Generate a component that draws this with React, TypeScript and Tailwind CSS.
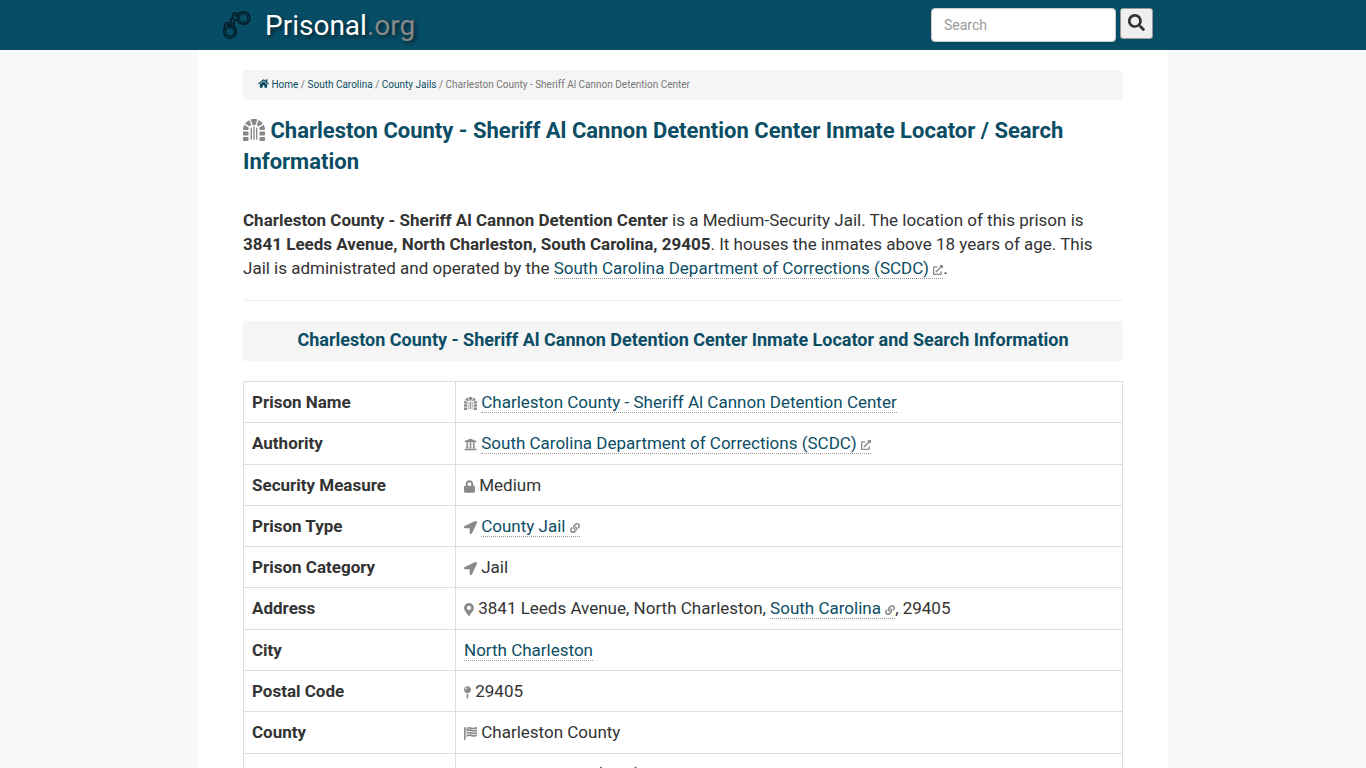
import type { ReactNode } from "react";
import {
  FaDungeon,
  FaExternalLinkAlt,
  FaFlagUsa,
  FaHome,
  FaLink,
  FaLocationArrow,
  FaLock,
  FaMapMarkerAlt,
  FaMapPin,
  FaSearch,
  FaUniversity,
} from "react-icons/fa";

const small = "inline-block align-[-2px] size-[13px] text-[#8a8a8a]";
const tiny = "inline-block align-[-1px] size-[10px] text-[#8a8a8a]";

function DottedLink({ children }: { children: ReactNode }) {
  return (
    <a href="#" className="border-b border-dotted border-[#999] text-[#0b4d64]">
      {children}
    </a>
  );
}

function Handcuffs() {
  return (
    <svg viewBox="0 0 30 30" className="size-[30px]" fill="none" stroke="#031922" aria-hidden="true">
      <circle cx="22.500" cy="8" r="6.300" strokeWidth="1.500" />
      <circle cx="22.500" cy="8" r="4.300" strokeWidth="1.100" />
      <ellipse cx="9" cy="22" rx="6.300" ry="6" strokeWidth="1.500" />
      <ellipse cx="9" cy="22" rx="4.300" ry="4" strokeWidth="1.100" />
      <path d="M17.500 3.500l-4.500-.6-1.800 2.600 1 3.500 4.500 1.500M13 5.500l4 .5" strokeWidth="1.300" />
      <path d="M3 20.500l.5-5.500 2-2.500 6 .5 2.500 4 .5 3.500M5.500 15h6" strokeWidth="1.300" />
      <path d="M11.500 7.500l-1.800 1.500.5 3M13.500 9.500l-.5 4.500" strokeWidth="1.500" />
    </svg>
  );
}

const rows: { label: string; value: ReactNode }[] = [
  {
    label: "Prison Name",
    value: (
      <>
        <FaDungeon className={small} />{" "}
        <DottedLink>Charleston County - Sheriff Al Cannon Detention Center</DottedLink>
      </>
    ),
  },
  {
    label: "Authority",
    value: (
      <>
        <FaUniversity className={small} />{" "}
        <DottedLink>
          South Carolina Department of Corrections (SCDC) <FaExternalLinkAlt className={tiny} />
        </DottedLink>
      </>
    ),
  },
  {
    label: "Security Measure",
    value: (
      <>
        <FaLock className="inline-block h-[13px] w-[11px] align-[-2px] text-[#8a8a8a]" /> Medium
      </>
    ),
  },
  {
    label: "Prison Type",
    value: (
      <>
        <FaLocationArrow className={small} />{" "}
        <DottedLink>
          County Jail <FaLink className={tiny} />
        </DottedLink>
      </>
    ),
  },
  { label: "Prison Category", value: <><FaLocationArrow className={small} /> Jail</> },
  {
    label: "Address",
    value: (
      <>
        <FaMapMarkerAlt className="inline-block h-[13px] w-[10px] align-[-2px] text-[#8a8a8a]" /> 3841 Leeds Avenue, North
        Charleston,{" "}
        <DottedLink>
          South Carolina <FaLink className={tiny} />
        </DottedLink>
        , 29405
      </>
    ),
  },
  { label: "City", value: <DottedLink>North Charleston</DottedLink> },
  {
    label: "Postal Code",
    value: (
      <>
        <FaMapPin className="inline-block h-[13px] w-[7px] align-[-2px] text-[#8a8a8a]" /> 29405
      </>
    ),
  },
  { label: "County", value: <><FaFlagUsa className={small} /> Charleston County</> },
  { label: "State", value: <><FaFlagUsa className={small} /> South Carolina (USA)</> },
];

export default function App() {
  return (
    <div className="h-screen overflow-hidden bg-[#f8f9fa] font-[Roboto,sans-serif] text-[17px] leading-6 text-[#333]">
      <header className="bg-[#074d66]">
        <div className="mx-auto flex h-[50px] max-w-[970px] items-center justify-between pr-[15px] pl-[23px]">
          <a href="#" className="flex items-center gap-[14px] text-[28px] leading-8 text-white">
            <Handcuffs />
            <span className="pt-px [text-shadow:2px_2px_4px_#00000099]">
              Prisonal<span className="text-[#888]">.org</span>
            </span>
          </a>
          <form className="flex items-start gap-1" onSubmit={(e) => e.preventDefault()}>
            <input
              type="search"
              aria-label="Search"
              placeholder="Search"
              className="h-[34px] w-[185px] rounded border border-[#ccc] bg-white px-3 text-sm placeholder:text-[#999]"
            />
            <button
              type="submit"
              aria-label="Submit search"
              className="flex h-[31px] w-[33px] items-center justify-center rounded-[3px] border border-[#999] bg-[#efefef] pb-0.5 text-[#333]"
            >
              <FaSearch className="size-[17px]" />
            </button>
          </form>
        </div>
      </header>

      <main className="mx-auto max-w-[970px] bg-white px-[45px] pt-5">
        <nav aria-label="Breadcrumb" className="rounded bg-[#f5f5f5] px-[15px] py-[5px] text-[10px] leading-5 text-[#777]">
          <a href="#" className="text-[#0b4d64]">
            <FaHome className="inline-block size-[11px] align-[-1px]" /> Home
          </a>{" / "}
          <a href="#" className="text-[#0b4d64]">South Carolina</a>{" / "}
          <a href="#" className="text-[#0b4d64]">County Jails</a>{" / "}
          <span>Charleston County - Sheriff Al Cannon Detention Center</span>
        </nav>

        <h1 className="mt-[15px] text-[22px] leading-[31px] font-bold text-[#0b4d64]">
          <FaDungeon className="inline-block size-[22px] align-[-3px] text-[#888]" /> Charleston County - Sheriff Al Cannon
          Detention Center Inmate Locator / Search Information
        </h1>

        <p className="mt-[31px]">
          <b className="font-bold">Charleston County - Sheriff Al Cannon Detention Center</b> is a Medium-Security Jail. The
          location of this prison is <b className="font-bold">3841 Leeds Avenue, North Charleston, South Carolina, 29405</b>. It
          houses the inmates above 18 years of age. This Jail is administrated and operated by the{" "}
          <DottedLink>
            South Carolina Department of Corrections (SCDC) <FaExternalLinkAlt className={tiny} />
          </DottedLink>
          .
        </p>

        <hr className="my-5 border-[#eee]" />

        <h2 className="bg-[#f5f5f5] pt-[7px] pb-[9px] text-center text-lg leading-6 font-bold text-[#0b4d64]">
          Charleston County - Sheriff Al Cannon Detention Center Inmate Locator and Search Information
        </h2>

        <table className="mt-5 w-full border-collapse leading-[1.43]">
          <tbody>
            {rows.map((row) => (
              <tr key={row.label}>
                <th scope="row" className="w-[212px] border border-[#ddd] p-2 text-left font-bold">
                  {row.label}
                </th>
                <td className="border border-[#ddd] p-2">{row.value}</td>
              </tr>
            ))}
          </tbody>
        </table>
      </main>
    </div>
  );
}
